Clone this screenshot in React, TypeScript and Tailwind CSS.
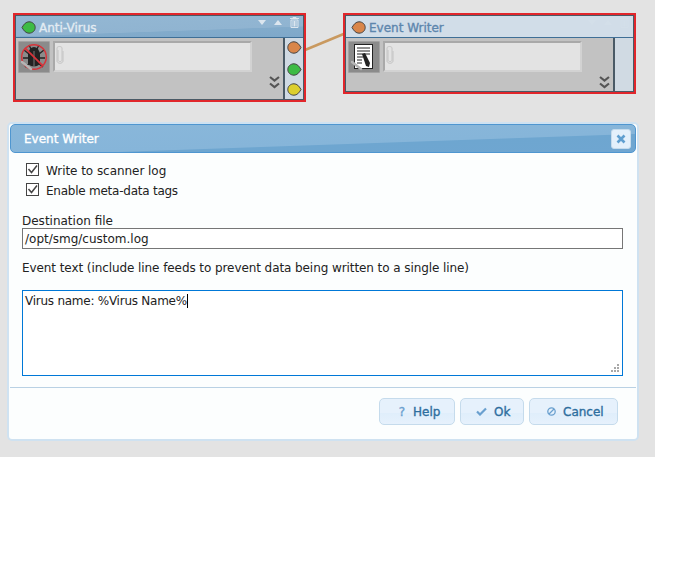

const Pin = ({ c, s = "#444" }: { c: string; s?: string }) => (
  <svg width="15" height="13" viewBox="0 0 15 13" className="block">
    <path d="M7 .8 C10 .8 12 3 14 6.5 C12 10 10 12.2 7 12.2 C3.5 12.2 .8 9.7 .8 6.5 C.8 3.3 3.5 .8 7 .8Z" fill={c} stroke={s} strokeWidth="1" />
  </svg>
);
const LeftPin = ({ c }: { c: string }) => (
  <svg width="15" height="13" viewBox="0 0 15 13" className="block">
    <path d="M8 .8 C11.5 .8 14.2 3.3 14.2 6.5 C14.2 9.7 11.5 12.2 8 12.2 C5 12.2 3 10 1 6.5 C3 3 5 .8 8 .8Z" fill={c} stroke="#444" strokeWidth="1" />
  </svg>
);
const Clip = () => (
  <svg width="8" height="20" viewBox="0 0 8 20" fill="none" stroke="#c4c4c4" strokeWidth="1" className="absolute left-[1px] top-[2px]">
    <path d="M2 5 V15 C2 17 6 17 6 15 V3 C6 1 1 1 1 3 V16 C1 19 7 19 7 16 V6" />
  </svg>
);
const Wrench = () => (
  <svg width="13" height="11" viewBox="0 0 13 11" className="absolute left-[1px] bottom-[1px]">
    <path d="M2 2 L11 9" stroke="#b5b5b5" strokeWidth="2.500" strokeLinecap="round" />
  </svg>
);
const Chevrons = () => (
  <svg width="11" height="13" viewBox="0 0 11 13" fill="none" stroke="#555" strokeWidth="2.200" className="block">
    <path d="M1 1 L5.500 4.500 L10 1" />
    <path d="M1 7.500 L5.500 11 L10 7.500" />
  </svg>
);
const Ctrls = ({ o = 1 }: { o?: number }) => (
  <div className="flex items-center gap-[8px] absolute right-[4px] top-[1px]" style={{ opacity: o }}>
    <svg width="8" height="5" viewBox="0 0 8 5"><path d="M0 0 H8 L4 5Z" fill="#dce6ef" /></svg>
    <svg width="8" height="5" viewBox="0 0 8 5"><path d="M0 5 H8 L4 0Z" fill="#dce6ef" /></svg>
    <svg width="9" height="11" viewBox="0 0 9 11" fill="none" stroke="#dce6ef" strokeWidth="1">
      <path d="M0 1.500 H9 M3 1.500 V.5 H6 V1.500 M1 3 H8 V10.500 H1Z M3 4 V9.500 M4.500 4 V9.500 M6 4 V9.500" />
    </svg>
  </div>
);
const BugIcon = () => (
  <svg width="28" height="28" viewBox="0 0 28 28" className="block">
    <g stroke="#222" strokeWidth="1.300" fill="none">
      <path d="M9 2 L11 6 M19 2 L17 6 M4 7 L9 11 M24 7 L19 11 M3 15 H9 M25 15 H19 M5 24 L10 20 M23 24 L18 20" />
    </g>
    <path d="M10 6 Q14 2 18 6 L20 10 V21 Q14 26 8 21 V10Z" fill="#222" />
    <path d="M14 8 V24" stroke="#777" strokeWidth="1" />
    <circle cx="14" cy="14" r="12.300" fill="none" stroke="#d8333a" strokeWidth="1.500" />
    <path d="M5.300 5.300 L22.700 22.700" stroke="#d8333a" strokeWidth="1.800" />
  </svg>
);
const DocIcon = () => (
  <svg width="20" height="26" viewBox="0 0 20 26" className="block">
    <rect x=".5" y=".5" width="18" height="24" fill="#fff" stroke="#222" />
    <path d="M3 4 H16 M3 7 H16 M3 10 H16 M3 13 H9 M3 16 H8 M3 19 H8" stroke="#222" strokeWidth="1" />
    <path d="M8 10 L11 9 L16 19 L15 23 L12 22Z" fill="#222" />
  </svg>
);

const Node = ({ title, pin, titleCls, headCls, ctrlO, h, icon, pins }: any) => (
  <div className="w-[293px] border-2 border-[#e1262b] bg-[#e3e3e3]" style={{ height: h }}>
    <div className="h-full flex flex-col border border-[#4a5a66] bg-[#c2c2c2]">
      <div className={`relative h-[22px] shrink-0 flex items-center gap-[3px] pl-[5px] pt-[2px] border-b border-[#3f6f96] text-[12px] [-webkit-text-stroke:0.35px_currentColor] ${headCls}`}>
        {pin}
        <span className={titleCls}>{title}</span>
        <Ctrls o={ctrlO} />
      </div>
      <div className="flex-1 flex min-h-0">
        <div className="relative flex-1">
          <div className="flex gap-[3px] pl-[2px] pt-[3px]">
            <div className="relative w-[32px] h-[32px] bg-[#8b8b8b] border border-[#a2a2a2] rounded-[1px] flex items-center justify-center">
              {icon}
              <Wrench />
            </div>
            <div className="relative w-[199px] h-[31px] bg-[#e3e3e3] border-t-2 border-l-2 border-[#a9a9a9] border-r-2 border-b-2 border-r-[#d2d2d2] border-b-[#d2d2d2]">
              <Clip />
            </div>
          </div>
          <div className="absolute right-[3px] top-[38px]"><Chevrons /></div>
        </div>
        <div className="w-[20px] shrink-0 border-l-2 border-[#4a5a66] bg-[#d0dae3] flex flex-col items-center">{pins}</div>
      </div>
    </div>
  </div>
);

const Check = () => (
  <svg width="13" height="13" viewBox="0 0 13 13" className="block shrink-0">
    <rect x=".5" y=".5" width="12" height="12" fill="#fff" stroke="#444" />
    <path d="M2.500 6 L5.500 9.500 L11 2.500" fill="none" stroke="#444" strokeWidth="1.500" />
  </svg>
);

const Btn = ({ w, icon, label, gap, pl }: any) => (
  <button className={`${w} ${pl} ${gap} h-[27px] flex items-center rounded-[5px] border border-[#c5dbec] bg-[linear-gradient(#e6f1fc_0,#e6f1fc_55%,#dfeefb_55%,#e6f1fc_100%)] text-[#2e6e9e] text-[12px] [-webkit-text-stroke:0.35px_currentColor]`}>
    {icon}
    <span>{label}</span>
  </button>
);

export default function App() {
  return (
    <div className="relative w-[699px] h-[578px] bg-white font-['DejaVu_Sans',sans-serif] text-[12px] text-[#222] overflow-hidden">
      <div className="relative w-[655px] h-[457px] bg-[#e3e3e3] pt-[13px]">
        <svg width="60" height="30" className="absolute left-[300px] top-[30px]">
          <path d="M5 20 L46 3" stroke="#c9995f" strokeWidth="2.500" />
        </svg>
        <div className="relative flex items-start pl-[13px] gap-[37px]">
          <Node
            title="Anti-Virus" h={89}
            pin={<LeftPin c="#3dbb45" />}
            headCls="bg-[linear-gradient(178deg,#93b7d3_0,#90b4d1_65%,#82abcb_67%,#7ea8ca_100%)]"
            titleCls="text-[#e3ecf3]"
            icon={<BugIcon />}
            pins={
              <div className="flex flex-col pt-[3px]">
                <Pin c="#d9864a" />
                <div className="h-[9px]" />
                <Pin c="#3dbb45" />
                <div className="h-[7px]" />
                <Pin c="#dccf2e" />
              </div>
            }
          />
          <Node
            title="Event Writer" h={81}
            pin={<LeftPin c="#d9864a" />}
            headCls="bg-[#d1dde8]"
            titleCls="text-[#5d86ad]"
            ctrlO={0.25}
            icon={<DocIcon />}
            pins={null}
          />
        </div>

        <div className="absolute left-[7px] top-[122px] w-[632px] h-[319px] rounded-[5px] border-2 border-[#cfe2f1] bg-[#fcfefe] flex flex-col">
          <div className="mx-px h-[29px] shrink-0 rounded-[5px] border border-[#4f96d0] bg-[linear-gradient(178deg,#89b7da_0,#86b5d9_62%,#6ea6d0_64%,#6fa6d1_100%)] flex items-center justify-between pl-[13px] pr-[4px] text-white text-[12px]">
            <span className="[-webkit-text-stroke:0.35px_currentColor]">Event Writer</span>
            <span className="w-[20px] h-[20px] rounded-[3px] bg-[#e3f0fb] border border-[#c5dbec] flex items-center justify-center">
              <svg width="10" height="10" viewBox="0 0 10 10"><path d="M1.500 1.500 L8.500 8.500 M8.500 1.500 L1.500 8.500" stroke="#5f9fd0" strokeWidth="2.600" /></svg>
            </span>
          </div>
          <div className="flex-1 flex flex-col pl-[13px] pr-[14px] pt-[9px]">
            <label className="flex items-center gap-[7px] pl-[4px] h-[14px]"><Check /><span className="mt-[3px] tracking-[-0.05px]">Write to scanner log</span></label>
            <label className="flex items-center gap-[7px] pl-[4px] h-[14px] mt-[6px]"><Check /><span className="mt-[3px] tracking-[-0.24px]">Enable meta-data tags</span></label>
            <div className="mt-[18px] leading-[14px]">Destination file</div>
            <div className="h-[21px] border border-[#767676] bg-white pl-[2px] pt-px flex items-center text-[12px]">/opt/smg/custom.log</div>
            <div className="mt-[12px] leading-[15px] tracking-[-0.08px]">Event text (include line feeds to prevent data being written to a single line)</div>
            <div className="relative mt-[14px] h-[86px] border border-[#0078d7] bg-white pl-[2px] pt-[3px] leading-[15px] tracking-[-0.25px]">
              <span>Virus name: %Virus Name%</span>
              <span className="inline-block w-px h-[14px] bg-black align-[-3px]" />
              <svg width="9" height="9" viewBox="0 0 9 9" className="absolute right-[2px] bottom-[2px]" fill="#a8a8a8">
                <rect x="6" y="0" width="2" height="2" /><rect x="3" y="3" width="2" height="2" /><rect x="6" y="3" width="2" height="2" /><rect x="0" y="6" width="2" height="2" /><rect x="3" y="6" width="2" height="2" /><rect x="6" y="6" width="2" height="2" />
              </svg>
            </div>
          </div>
          <div className="mx-px h-px bg-[#b9d1e4] mb-[10px]" />
          <div className="flex justify-end gap-[5px] pr-[19px] pb-[14px]">
            <Btn w="w-[76px]" pl="pl-[18px]" gap="gap-[7px]" label="Help" icon={<span className="text-[#6aa0cf] text-[12px] w-[8px] text-center">?</span>} />
            <Btn w="w-[64px]" pl="pl-[15px]" gap="gap-[7px]" label="Ok" icon={
              <svg width="11" height="9" viewBox="0 0 11 9"><path d="M1 4.500 L4 7.500 L10 1.500" fill="none" stroke="#6aa0cf" strokeWidth="2.200" /></svg>
            } />
            <Btn w="w-[89px]" pl="pl-[17px]" gap="gap-[7px]" label="Cancel" icon={
              <svg width="9" height="9" viewBox="0 0 9 9" fill="none" stroke="#6aa0cf" strokeWidth="1.300"><circle cx="4.500" cy="4.500" r="3.700" /><path d="M2 7 L7 2" /></svg>
            } />
          </div>
        </div>
      </div>
    </div>
  );
}
